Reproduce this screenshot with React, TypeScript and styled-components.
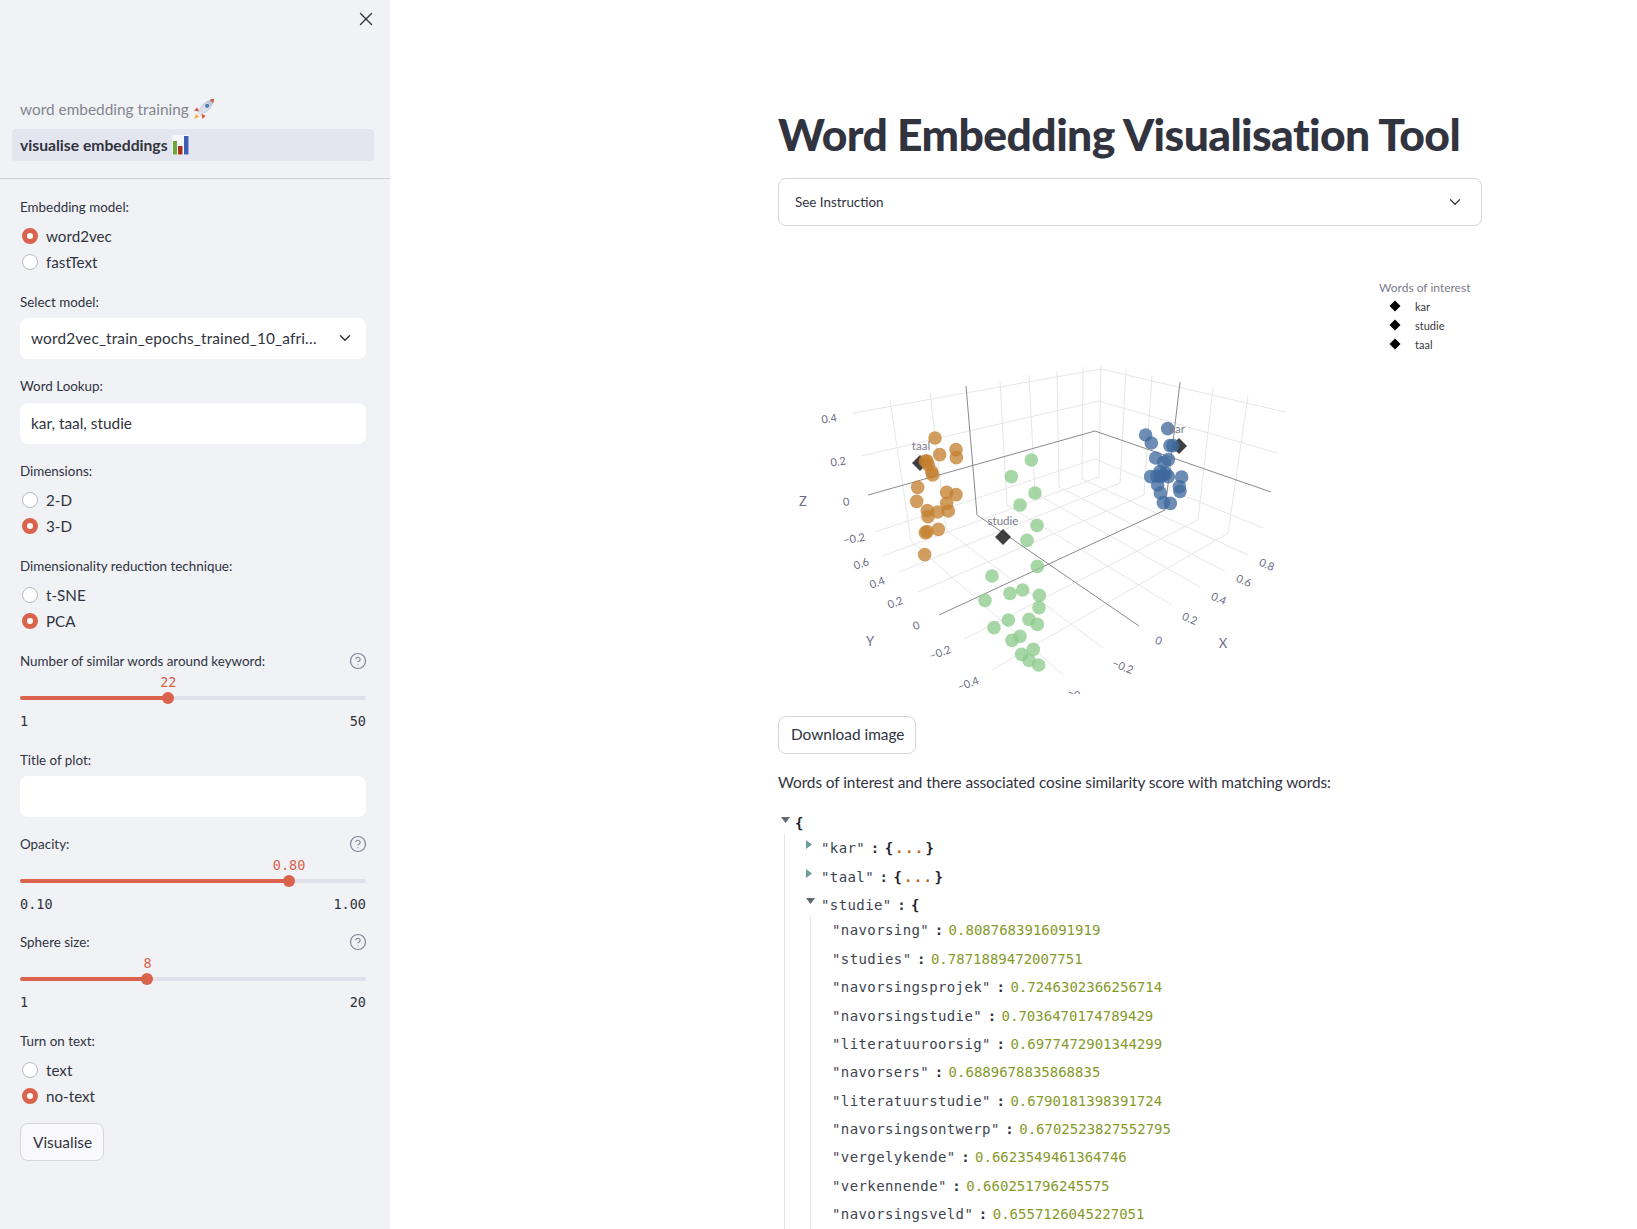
import React from 'react';
import styled, { createGlobalStyle } from 'styled-components';
import { ChevronDown, CircleHelp, X } from 'lucide-react';

const SANS = `Lato, "Noto Sans", "Liberation Sans", sans-serif`;
const MONO = `"DejaVu Sans Mono", "Liberation Mono", monospace`;
const ACCENT = '#d9634d';

const GlobalStyle = createGlobalStyle`
  html, body {
    margin: 0;
    height: 100%;
    overflow: hidden;
    background: #fff;
    color: #31333f;
    font-family: ${SANS};
  }
  * { box-sizing: border-box; }
`;

const Page = styled.div`
  display: flex;
  height: 100vh;
  overflow: hidden;
`;

const Sidebar = styled.aside`
  flex: 0 0 390px;
  height: 100%;
  background: #f0f2f6;
`;

const NavBlock = styled.div`
  height: 179px;
  padding: 0 16px 0 12px;
  border-bottom: 1px solid #cfd0d6;
`;

const CloseRow = styled.div`
  height: 38px;
  display: flex;
  align-items: center;
  justify-content: flex-end;
  margin-right: -3px;
  margin-bottom: 55px;
  color: #31333f;
`;

const NavItem = styled.div<{ $active?: boolean }>`
  height: 32px;
  margin-top: ${(p) => (p.$active ? '4px' : '0')};
  padding-left: 8px;
  display: flex;
  align-items: center;
  gap: 4px;
  border-radius: 4px;
  font-size: ${(p) => (p.$active ? '15.7px' : '15.4px')};
  font-weight: ${(p) => (p.$active ? 700 : 400)};
  color: ${(p) => (p.$active ? '#31333f' : '#85868f')};
  background: ${(p) => (p.$active ? '#e3e6ee' : 'transparent')};
`;

const Form = styled.div`
  display: flex;
  flex-direction: column;
  gap: 17px;
  padding: 18px 24px 0 20px;
`;

const Field = styled.div``;

const LabelRow = styled.div<{ $gap?: number }>`
  display: flex;
  align-items: center;
  justify-content: space-between;
  height: 20px;
  margin-bottom: ${(p) => p.$gap ?? 6}px;
  font-size: 13.4px;
  color: #31333f;
`;

const SliderLabelRow = styled(LabelRow)`
  margin-bottom: 0;
`;

const Help = styled(CircleHelp)`
  margin-right: -1px;
  color: #808495;
`;

const RadioRow = styled.div`
  display: flex;
  align-items: center;
  gap: 8px;
  height: 26px;
  padding-left: 2px;
  font-size: 15.2px;
`;

const RadioDot = styled.span<{ $on?: boolean }>`
  width: 16px;
  height: 16px;
  border-radius: 50%;
  background: #fff;
  border: ${(p) => (p.$on ? `5px solid ${ACCENT}` : '1px solid #b9bac1')};
`;

const WhiteBox = styled.div`
  height: 41px;
  padding: 0 11px 2px;
  display: flex;
  align-items: center;
  background: #fff;
  border-radius: 8px;
  font-size: 15.4px;
`;

const SelectBox = styled(WhiteBox)`
  justify-content: space-between;
  padding-right: 12px;
`;

const SelectText = styled.span`
  white-space: nowrap;
  letter-spacing: 0.14px;
`;

const SliderBody = styled.div<{ $tight?: boolean }>`
  height: ${(p) => (p.$tight ? 61 : 62)}px;
  position: relative;
`;

const SliderValue = styled.span`
  position: absolute;
  top: 3px;
  transform: translateX(-50%);
  font-family: ${MONO};
  font-size: 13.5px;
  line-height: 16px;
  color: ${ACCENT};
`;

const Track = styled.div`
  position: absolute;
  top: 25px;
  left: 0;
  right: 0;
  height: 4px;
  border-radius: 2px;
  background: #dfe0e9;
`;

const TrackFill = styled.div`
  height: 100%;
  border-radius: 2px;
  background: ${ACCENT};
`;

const Thumb = styled.span`
  position: absolute;
  top: -4px;
  width: 12px;
  height: 12px;
  margin-left: -6px;
  border-radius: 50%;
  background: ${ACCENT};
`;

const TickRow = styled.div`
  position: absolute;
  left: 0;
  right: 0;
  top: 42px;
  display: flex;
  justify-content: space-between;
  font-family: ${MONO};
  font-size: 13.5px;
  line-height: 16px;
  color: #31333f;
`;

const Button = styled.button<{ $bg?: string }>`
  display: block;
  height: 38px;
  padding: 0 12px;
  background: ${(p) => p.$bg || '#fff'};
  border: 1px solid #d5d6da;
  border-radius: 8px;
  color: #31333f;
  font-family: ${SANS};
  font-size: 15.4px;
  white-space: nowrap;
`;

const VisualiseButton = styled(Button)`
  margin-top: -3px;
  width: 84px;
`;

const Main = styled.main`
  flex: 1;
  min-width: 0;
  padding: 107px 0 0 388px;
`;

const Content = styled.div`
  width: 704px;
`;

const Title = styled.h1`
  margin: 0;
  height: 54px;
  font-size: 44.5px;
  line-height: 54px;
  font-weight: 900;
  color: #31333f;
  white-space: nowrap;
  letter-spacing: -0.62px;
`;

const Expander = styled.div`
  margin-top: 17px;
  height: 48px;
  padding: 0 17px 0 16px;
  display: flex;
  align-items: center;
  justify-content: space-between;
  border: 1px solid #d5d6da;
  border-radius: 8px;
  font-size: 13.4px;
`;

const PlotSvg = styled.svg`
  display: block;
  width: 704px;
  height: 434px;
  margin-top: 34px;
  font-family: ${SANS};
`;

const DownloadButton = styled(Button)`
  margin-top: 22px;
  padding-bottom: 2px;
  width: 138px;
`;

const Paragraph = styled.p`
  margin: 18px 0 0;
  height: 20px;
  line-height: 20px;
  font-size: 15.4px;
  white-space: nowrap;
  letter-spacing: -0.08px;
`;

const Json = styled.div`
  margin-top: 20px;
  font-family: ${MONO};
  font-size: 14px;
`;

const RootRow = styled.div`
  height: 22px;
  display: flex;
  align-items: center;
`;

const Nested = styled.div`
  margin-left: 6px;
  padding-left: 19px;
  border-left: 1px solid #e6e6e9;
`;

const InnerNested = styled(Nested)`
  margin-top: -3px;
  padding-left: 21px;
  padding-bottom: 40px;
`;

const Row = styled.div`
  height: 28.4px;
  display: flex;
  align-items: center;
  white-space: nowrap;
`;

const CaretSlot = styled.span<{ $inset?: number }>`
  display: flex;
  width: 17px;
  flex: none;
  margin-top: -7px;
  padding-left: ${(p) => p.$inset ?? 2}px;
`;

const RootCaretSlot = styled(CaretSlot)`
  margin-top: -6px;
`;

const Key = styled.span`
  color: #3d4450;
  letter-spacing: 0.4px;
`;

const Colon = styled.span`
  margin: 0 5.5px 0 5.5px;
  color: #31333f;
  font-weight: 700;
`;

const Brace = styled.span`
  color: #1f2430;
  font-weight: 700;
`;

const Dots = styled.span`
  color: #b8651a;
  font-weight: 700;
  letter-spacing: 1.4px;
  margin: 0 1px 0 2px;
`;

const NumberValue = styled.span`
  color: #859a2b;
`;

const Rocket = () => (
  <svg width="22" height="22" viewBox="0 0 21 21">
    <path d="M3 15 L1 20 L6 18 Z" fill="#f2b63c" />
    <path d="M4 9 L1 12 L6 13 Z" fill="#d8553e" />
    <path d="M12 17 L9 20 L8 15 Z" fill="#d8553e" />
    <path d="M5 14 C7 7 12 2 20 1 C19 9 14 14 7 16 Z" fill="#bcc6d6" />
    <path d="M5 14 C7 9 10 6 13 4 L17 8 C14 12 11 14 7 16 Z" fill="#d9dee8" />
    <circle cx="13.5" cy="7.5" r="2" fill="#4d7fb3" />
    <path d="M16 1.7 C17 1.4 19 1 20 1 C20 2 19.6 4 19.3 5 Z" fill="#d8553e" />
  </svg>
);

const BarChart = () => (
  <svg width="17" height="20" viewBox="0 0 17 20">
    <rect x="0" y="0" width="17" height="20" fill="#f6f7fa" />
    <rect x="1" y="6" width="4" height="13.5" fill="#6aa83a" />
    <rect x="6" y="11" width="4.5" height="8.5" fill="#a5321c" />
    <rect x="12" y="1" width="4.5" height="18.5" fill="#3a5fb5" />
  </svg>
);

type Line = [number, number, number, number];

const gridLines: Line[] = [
  // left wall, horizontal
  [853, 413, 1101, 369],
  [861, 456, 1099, 401],
  [875, 532, 1095, 459],
  // left wall, vertical
  [890, 400, 911, 541],
  [930, 393, 946, 530],
  [1000, 381, 1007, 505],
  [1029, 375, 1035, 493],
  [1057, 371, 1059, 487],
  [1083, 367, 1082, 479],
  [1101, 365, 1099, 477],
  // right wall, horizontal
  [1101, 369, 1285, 412],
  [1099, 401, 1277, 453],
  [1095, 459, 1263, 528],
  // right wall, vertical
  [1126, 370, 1120, 483],
  [1152, 375, 1144, 495],
  [1213, 388, 1198, 520],
  [1248, 396, 1228, 533],
  // floor
  [911, 541, 1063, 675],
  [946, 530, 1103, 648],
  [1007, 505, 1172, 605],
  [1035, 493, 1200, 587],
  [1059, 487, 1225, 571],
  [1082, 479, 1248, 555],
  [882, 556, 1099, 477],
  [899, 572, 1120, 483],
  [918, 592, 1144, 495],
  [964, 639, 1198, 520],
  [992, 670, 1228, 533],
];

const axisLines: Line[] = [
  [868, 495, 1095, 431],
  [1095, 431, 1271, 492],
  [966, 386, 977, 515],
  [1180, 382, 1165, 510],
  [977, 515, 1139, 626],
  [939, 615, 1165, 510],
];

const orange = [
  [465, 234], [528, 269], [529, 293], [479, 284], [441, 303], [436, 303], [445, 315],
  [455, 335], [458, 345], [413, 382], [410, 424], [500, 397], [528, 404], [500, 430],
  [505, 453], [473, 456], [442, 452], [444, 470], [475, 508], [441, 515], [436, 518],
  [434, 584],
].map(([x, y]) => [780 + x / 3, 360 + y / 3]);

const green = [
  [94, 300], [34, 350], [105, 399], [60, 435], [111, 496], [81, 541], [112, 619],
  [30, 700], [68, 690], [118, 706], [117, 743], [87, 778], [112, 793], [60, 829],
  [36, 841], [100, 868], [65, 883], [87, 901], [116, 915], [-24, 648], [-45, 721],
  [25, 780], [-18, 803],
].map(([x, y]) => [1000 + x / 3, 360 + y / 3]);

const blue = [
  [503, 206], [437, 225], [454, 249], [510, 257], [519, 257], [467, 294], [505, 299],
  [491, 307], [480, 335], [470, 348], [452, 350], [505, 350], [482, 350], [490, 345],
  [545, 351], [473, 375], [538, 380], [540, 394], [481, 399], [490, 428], [511, 430],
  [497, 340],
].map(([x, y]) => [1000 + x / 3, 360 + y / 3]);

const ticks: [string, number, number, number][] = [
  ['0.4', 829, 418, -8],
  ['0.2', 838, 461, -8],
  ['0', 846, 501, -8],
  ['−0.2', 854, 538, -10],
  ['0.6', 861, 563, -20],
  ['0.4', 877, 582, -20],
  ['0.2', 895, 602, -20],
  ['0', 916, 625, -20],
  ['−0.2', 940, 652, -20],
  ['−0.4', 968, 683, -20],
  ['0.8', 1267, 564, 22],
  ['0.6', 1244, 580, 22],
  ['0.4', 1219, 598, 22],
  ['0.2', 1190, 618, 22],
  ['0', 1159, 640, 22],
  ['−0.2', 1123, 666, 22],
  ['−0.4', 1078, 695, 22],
];

const diamonds: [string, number, number][] = [
  ['taal', 920, 463],
  ['studie', 1003, 537],
  ['kar', 1179, 446],
];

const legend: [string, number][] = [
  ['kar', 306],
  ['studie', 325],
  ['taal', 344],
];

const Dots3D = ({ pts, fill }: { pts: number[][]; fill: string }) => (
  <g fill={fill} fillOpacity={0.76}>
    {pts.map(([x, y], i) => (
      <circle key={i} cx={x} cy={y} r={6.8} />
    ))}
  </g>
);

const Plot = () => (
  <PlotSvg viewBox="778 260 704 434">
    <g stroke="#e6e6e8" strokeWidth={1}>
      {gridLines.map(([a, b, c, d], i) => (
        <line key={i} x1={a} y1={b} x2={c} y2={d} />
      ))}
    </g>
    <g stroke="#8a8a8e" strokeWidth={1}>
      {axisLines.map(([a, b, c, d], i) => (
        <line key={i} x1={a} y1={b} x2={c} y2={d} />
      ))}
    </g>
    {diamonds.map(([name, x, y]) => (
      <path
        key={name}
        d={`M${x} ${y - 8}L${x + 8} ${y}L${x} ${y + 8}L${x - 8} ${y}Z`}
        fill="#2f2f2f"
        fillOpacity={0.92}
      />
    ))}
    <Dots3D pts={green} fill="#8bcb8b" />
    <Dots3D pts={orange} fill="#c47f2e" />
    <Dots3D pts={blue} fill="#3f699e" />
    <g fontSize={11.5} fill="#7b7b90" textAnchor="middle">
      <text x={921} y={450}>taal</text>
      <text x={1003} y={525}>studie</text>
      <text x={1177} y={433}>kar</text>
    </g>
    <g fontSize={11} fill="#6d6d85" textAnchor="middle" dominantBaseline="central">
      {ticks.map(([t, x, y, r], i) => (
        <text key={i} x={x} y={y} transform={`rotate(${r} ${x} ${y})`}>
          {t}
        </text>
      ))}
    </g>
    <g fontSize={13} fill="#6d6d85" textAnchor="middle" dominantBaseline="central">
      <text x={803} y={501}>Z</text>
      <text x={870} y={641}>Y</text>
      <text x={1223} y={643}>X</text>
    </g>
    <text x={1379} y={292} fontSize={12} fill="#7b7b8e">Words of interest</text>
    {legend.map(([name, y]) => (
      <g key={name}>
        <path d={`M1395 ${y - 5.5}L1400.5 ${y}L1395 ${y + 5.5}L1389.5 ${y}Z`} fill="#000" />
        <text x={1415} y={y + 5} fontSize={11} fill="#3a3a3a">{name}</text>
      </g>
    ))}
  </PlotSvg>
);

const Radios = ({ options, selected }: { options: string[]; selected: string }) => (
  <>
    {options.map((o) => (
      <RadioRow key={o}>
        <RadioDot $on={o === selected} />
        {o}
      </RadioRow>
    ))}
  </>
);

const Slider = ({
  label,
  min,
  max,
  value,
  digits = 0,
  tight,
}: {
  label: string;
  min: number;
  max: number;
  value: number;
  digits?: number;
  tight?: boolean;
}) => {
  const pct = `${((value - min) / (max - min)) * 100}%`;
  return (
    <Field>
      <SliderLabelRow>
        {label}
        <Help size={18} strokeWidth={1.6} />
      </SliderLabelRow>
      <SliderBody $tight={tight}>
        <SliderValue style={{ left: pct }}>{value.toFixed(digits)}</SliderValue>
        <Track>
          <TrackFill style={{ width: pct }} />
          <Thumb style={{ left: pct }} />
        </Track>
        <TickRow>
          <span>{min.toFixed(digits)}</span>
          <span>{max.toFixed(digits)}</span>
        </TickRow>
      </SliderBody>
    </Field>
  );
};

const studie: [string, string][] = [
  ['navorsing', '0.8087683916091919'],
  ['studies', '0.7871889472007751'],
  ['navorsingsprojek', '0.7246302366256714'],
  ['navorsingstudie', '0.7036470174789429'],
  ['literatuuroorsig', '0.6977472901344299'],
  ['navorsers', '0.6889678835868835'],
  ['literatuurstudie', '0.6790181398391724'],
  ['navorsingsontwerp', '0.6702523827552795'],
  ['vergelykende', '0.6623549461364746'],
  ['verkennende', '0.660251796245575'],
  ['navorsingsveld', '0.6557126045227051'],
];

const CaretDown = () => (
  <svg width="9" height="6" viewBox="0 0 9 6">
    <path d="M0 0H9L4.5 6Z" fill="#5f6b6e" />
  </svg>
);

const CaretRight = () => (
  <svg width="6" height="9" viewBox="0 0 6 9">
    <path d="M0 0L6 4.5L0 9Z" fill="#6f9d96" />
  </svg>
);

const Collapsed = ({ name }: { name: string }) => (
  <Row>
    <CaretSlot>
      <CaretRight />
    </CaretSlot>
    <Key>"{name}"</Key>
    <Colon>:</Colon>
    <Brace>{'{'}</Brace>
    <Dots>...</Dots>
    <Brace>{'}'}</Brace>
  </Row>
);

const App = () => (
  <>
    <GlobalStyle />
    <Page>
      <Sidebar>
        <NavBlock>
          <CloseRow>
            <X size={22} strokeWidth={1.5} />
          </CloseRow>
          <NavItem>
            word embedding training
            <Rocket />
          </NavItem>
          <NavItem $active>
            visualise embeddings
            <BarChart />
          </NavItem>
        </NavBlock>
        <Form>
          <Field>
            <LabelRow>Embedding model:</LabelRow>
            <Radios options={['word2vec', 'fastText']} selected="word2vec" />
          </Field>
          <Field>
            <LabelRow>Select model:</LabelRow>
            <SelectBox>
              <SelectText>word2vec_train_epochs_trained_10_afri…</SelectText>
              <ChevronDown size={18} strokeWidth={2} />
            </SelectBox>
          </Field>
          <Field>
            <LabelRow $gap={7}>Word Lookup:</LabelRow>
            <WhiteBox>kar, taal, studie</WhiteBox>
          </Field>
          <Field>
            <LabelRow>Dimensions:</LabelRow>
            <Radios options={['2-D', '3-D']} selected="3-D" />
          </Field>
          <Field>
            <LabelRow>Dimensionality reduction technique:</LabelRow>
            <Radios options={['t-SNE', 'PCA']} selected="PCA" />
          </Field>
          <Slider label="Number of similar words around keyword:" min={1} max={50} value={22} />
          <Field>
            <LabelRow>Title of plot:</LabelRow>
            <WhiteBox />
          </Field>
          <Slider label="Opacity:" min={0.1} max={1} value={0.8} digits={2} tight />
          <Slider label="Sphere size:" min={1} max={20} value={8} />
          <Field>
            <LabelRow>Turn on text:</LabelRow>
            <Radios options={['text', 'no-text']} selected="no-text" />
          </Field>
          <VisualiseButton $bg="#f9f9fb">Visualise</VisualiseButton>
        </Form>
      </Sidebar>
      <Main>
        <Content>
          <Title>Word Embedding Visualisation Tool</Title>
          <Expander>
            See Instruction
            <ChevronDown size={18} strokeWidth={1.6} />
          </Expander>
          <Plot />
          <DownloadButton>Download image</DownloadButton>
          <Paragraph>
            Words of interest and there associated cosine similarity score with matching words:
          </Paragraph>
          <Json>
            <RootRow>
              <RootCaretSlot $inset={3}>
                <CaretDown />
              </RootCaretSlot>
              <Brace>{'{'}</Brace>
            </RootRow>
            <Nested>
              <Collapsed name="kar" />
              <Collapsed name="taal" />
              <Row>
                <CaretSlot $inset={2}>
                  <CaretDown />
                </CaretSlot>
                <Key>"studie"</Key>
                <Colon>:</Colon>
                <Brace>{'{'}</Brace>
              </Row>
              <InnerNested>
                {studie.map(([k, v]) => (
                  <Row key={k}>
                    <Key>"{k}"</Key>
                    <Colon>:</Colon>
                    <NumberValue>{v}</NumberValue>
                  </Row>
                ))}
              </InnerNested>
            </Nested>
          </Json>
        </Content>
      </Main>
    </Page>
  </>
);

export default App;
